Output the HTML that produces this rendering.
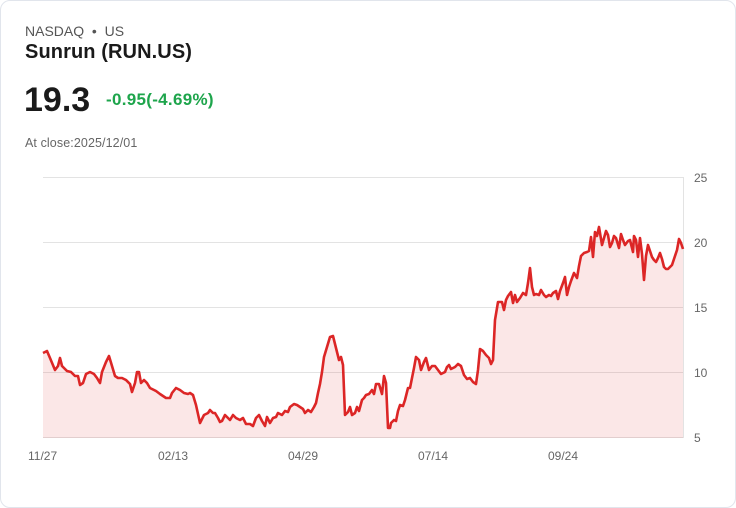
<!DOCTYPE html>
<html><head><meta charset="utf-8"><style>
body{margin:0;background:#fff;font-family:"Liberation Sans",sans-serif;}
.card{position:absolute;left:0;top:0;width:734px;height:506px;border:1px solid #e1e5ec;border-radius:10px;background:#fff;}
.t{position:absolute;white-space:nowrap;}
</style></head><body>
<div class="card"></div>
<div class="t" style="left:25px;top:23px;font-size:14px;color:#555;">NASDAQ &nbsp;•&nbsp; US</div>
<div class="t" style="left:25px;top:41px;font-size:20px;font-weight:bold;color:#1a1a1a;letter-spacing:0.1px;">Sunrun (RUN.US)</div>
<div class="t" style="left:24px;top:81px;font-size:34px;font-weight:bold;color:#1a1a1a;">19.3</div>
<div class="t" style="left:106px;top:90px;font-size:17px;font-weight:bold;color:#1ea54c;letter-spacing:0.3px;">-0.95(-4.69%)</div>
<div class="t" style="left:25px;top:136px;font-size:12.5px;color:#666;letter-spacing:0.1px;">At close:2025/12/01</div>
<svg width="736" height="508" style="position:absolute;left:0;top:0">
<g stroke="#e3e3e3" stroke-width="1">
<line x1="43" y1="177.5" x2="683" y2="177.5"/><line x1="43" y1="242.5" x2="683" y2="242.5"/><line x1="43" y1="307.5" x2="683" y2="307.5"/><line x1="43" y1="372.5" x2="683" y2="372.5"/><line x1="43" y1="437.5" x2="683" y2="437.5"/>
<line x1="683.5" y1="177" x2="683.5" y2="438"/>
</g>
<g font-size="12" fill="#666" font-family="Liberation Sans,sans-serif">
<text x="694" y="182">25</text><text x="694" y="247">20</text><text x="694" y="312">15</text><text x="694" y="377">10</text><text x="694" y="442">5</text>
<text x="28" y="460">11/27</text><text x="158" y="460">02/13</text><text x="288" y="460">04/29</text><text x="418" y="460">07/14</text><text x="548" y="460">09/24</text>
</g>
<polyline fill="rgba(220,38,38,0.11)" stroke="none" points="43,438 43,353 47,351 50,358 55,370 58,366 60,358 62,366 64,368 67,371 71,372 75,376 78,376 80,385 83,383 86,374 90,372 94,374 97,378 100,383 102,372 106,362 109,356 112,366 115,376 118,378 122,378 126,380 130,384 132,392 135,383 137,372 139,372 141,383 144,380 147,383 150,388 156,391 160,394 163,396 166,398 170,398 172,393 176,388 180,390 184,393 188,394 190,393 193,395 196,405 198,414 200,423 204,415 208,413 210,410 213,413 215,413 218,418 220,422 222,421 225,415 228,418 230,420 233,415 236,418 240,420 243,418 246,424 250,424 253,426 256,418 259,415 262,421 265,426 267,417 270,423 273,418 276,417 278,413 282,415 285,411 288,412 290,407 294,404 297,405 300,407 303,409 305,413 308,410 311,412 314,407 316,403 318,393 320,384 322,372 324,357 327,347 330,337 333,336 336,348 339,360 341,357 343,365 345,415 348,412 350,407 352,415 355,413 357,407 359,411 362,400 364,398 366,395 369,394 372,390 374,394 376,384 379,384 382,394 384,376 386,383 388,428 390,428 391,423 394,420 396,421 398,411 400,405 403,406 405,400 408,388 410,388 412,378 414,368 416,357 419,360 421,370 424,362 426,358 429,370 432,366 435,366 438,370 441,374 445,372 447,367 449,365 451,369 455,367 458,364 461,366 464,375 467,379 470,378 473,382 476,384 478,370 480,349 483,351 486,355 489,358 491,364 493,360 495,320 498,302 502,302 504,310 506,300 508,296 511,292 513,303 515,295 517,302 520,298 523,293 526,295 528,283 530,268 532,287 534,295 536,294 539,295 541,290 544,295 546,297 549,295 551,296 553,293 556,291 558,299 560,291 563,283 565,277 567,295 569,287 571,281 574,273 577,278 579,266 581,256 584,253 587,252 589,251 591,237 593,257 595,232 597,236 599,227 602,245 604,238 606,231 608,235 610,247 612,243 614,236 616,238 619,248 621,234 623,240 625,245 628,241 630,240 633,252 634,236 636,240 638,257 640,238 642,254 644,280 646,256 648,245 650,251 652,257 654,260 656,262 658,258 660,253 662,259 664,267 666,269 668,269 670,267 672,265 674,259 677,250 679,239 681,243 683,249 683,438"/>
<polyline fill="none" stroke="#dc2626" stroke-width="2.6" stroke-linejoin="round" points="43,353 47,351 50,358 55,370 58,366 60,358 62,366 64,368 67,371 71,372 75,376 78,376 80,385 83,383 86,374 90,372 94,374 97,378 100,383 102,372 106,362 109,356 112,366 115,376 118,378 122,378 126,380 130,384 132,392 135,383 137,372 139,372 141,383 144,380 147,383 150,388 156,391 160,394 163,396 166,398 170,398 172,393 176,388 180,390 184,393 188,394 190,393 193,395 196,405 198,414 200,423 204,415 208,413 210,410 213,413 215,413 218,418 220,422 222,421 225,415 228,418 230,420 233,415 236,418 240,420 243,418 246,424 250,424 253,426 256,418 259,415 262,421 265,426 267,417 270,423 273,418 276,417 278,413 282,415 285,411 288,412 290,407 294,404 297,405 300,407 303,409 305,413 308,410 311,412 314,407 316,403 318,393 320,384 322,372 324,357 327,347 330,337 333,336 336,348 339,360 341,357 343,365 345,415 348,412 350,407 352,415 355,413 357,407 359,411 362,400 364,398 366,395 369,394 372,390 374,394 376,384 379,384 382,394 384,376 386,383 388,428 390,428 391,423 394,420 396,421 398,411 400,405 403,406 405,400 408,388 410,388 412,378 414,368 416,357 419,360 421,370 424,362 426,358 429,370 432,366 435,366 438,370 441,374 445,372 447,367 449,365 451,369 455,367 458,364 461,366 464,375 467,379 470,378 473,382 476,384 478,370 480,349 483,351 486,355 489,358 491,364 493,360 495,320 498,302 502,302 504,310 506,300 508,296 511,292 513,303 515,295 517,302 520,298 523,293 526,295 528,283 530,268 532,287 534,295 536,294 539,295 541,290 544,295 546,297 549,295 551,296 553,293 556,291 558,299 560,291 563,283 565,277 567,295 569,287 571,281 574,273 577,278 579,266 581,256 584,253 587,252 589,251 591,237 593,257 595,232 597,236 599,227 602,245 604,238 606,231 608,235 610,247 612,243 614,236 616,238 619,248 621,234 623,240 625,245 628,241 630,240 633,252 634,236 636,240 638,257 640,238 642,254 644,280 646,256 648,245 650,251 652,257 654,260 656,262 658,258 660,253 662,259 664,267 666,269 668,269 670,267 672,265 674,259 677,250 679,239 681,243 683,249"/>
</svg>
</body></html>
